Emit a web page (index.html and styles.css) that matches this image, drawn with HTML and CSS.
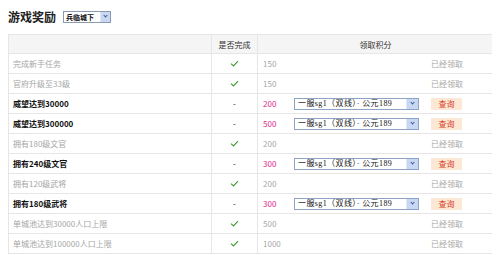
FILE: index.html
```html
<!DOCTYPE html>
<html lang="zh">
<head>
<meta charset="utf-8">
<link rel="stylesheet" href="styles.css">
</head>
<body>
<div class="title-bar">
  <h1 class="title">游戏奖励</h1>
  <div class="mini-select"><span class="mini-text">兵临城下</span><i class="mini-arr"></i></div>
</div>
<table class="rewards">
  <thead>
    <tr><th class="c-name"></th><th class="c-done">是否完成</th><th class="c-pts">领取积分</th></tr>
  </thead>
  <tbody>
    <tr class="got"><td class="c-name">完成新手任务</td><td class="c-done"><svg class="tick" viewBox="0 0 10 8"><path d="M1 4.2 L3.8 6.8 L9 1.2"/></svg></td><td class="c-pts"><div class="pts-grid"><span class="num">150</span><span></span><span></span><span class="status">已经领取</span></div></td></tr>
    <tr class="got"><td class="c-name">官府升级至33级</td><td class="c-done"><svg class="tick" viewBox="0 0 10 8"><path d="M1 4.2 L3.8 6.8 L9 1.2"/></svg></td><td class="c-pts"><div class="pts-grid"><span class="num">150</span><span></span><span></span><span class="status">已经领取</span></div></td></tr>
    <tr class="todo"><td class="c-name">威望达到30000</td><td class="c-done">-</td><td class="c-pts"><div class="pts-grid"><span class="num">200</span><div class="srv-select"><span class="srv-text">一服sg1（双线）· 公元189</span><i class="srv-arr"></i></div><span></span><button class="query">查询</button></div></td></tr>
    <tr class="todo"><td class="c-name">威望达到300000</td><td class="c-done">-</td><td class="c-pts"><div class="pts-grid"><span class="num">500</span><div class="srv-select"><span class="srv-text">一服sg1（双线）· 公元189</span><i class="srv-arr"></i></div><span></span><button class="query">查询</button></div></td></tr>
    <tr class="got"><td class="c-name">拥有180级文官</td><td class="c-done"><svg class="tick" viewBox="0 0 10 8"><path d="M1 4.2 L3.8 6.8 L9 1.2"/></svg></td><td class="c-pts"><div class="pts-grid"><span class="num">200</span><span></span><span></span><span class="status">已经领取</span></div></td></tr>
    <tr class="todo"><td class="c-name">拥有240级文官</td><td class="c-done">-</td><td class="c-pts"><div class="pts-grid"><span class="num">300</span><div class="srv-select"><span class="srv-text">一服sg1（双线）· 公元189</span><i class="srv-arr"></i></div><span></span><button class="query">查询</button></div></td></tr>
    <tr class="got"><td class="c-name">拥有120级武将</td><td class="c-done"><svg class="tick" viewBox="0 0 10 8"><path d="M1 4.2 L3.8 6.8 L9 1.2"/></svg></td><td class="c-pts"><div class="pts-grid"><span class="num">200</span><span></span><span></span><span class="status">已经领取</span></div></td></tr>
    <tr class="todo"><td class="c-name">拥有180级武将</td><td class="c-done">-</td><td class="c-pts"><div class="pts-grid"><span class="num">300</span><div class="srv-select"><span class="srv-text">一服sg1（双线）· 公元189</span><i class="srv-arr"></i></div><span></span><button class="query">查询</button></div></td></tr>
    <tr class="got"><td class="c-name">单城池达到30000人口上限</td><td class="c-done"><svg class="tick" viewBox="0 0 10 8"><path d="M1 4.2 L3.8 6.8 L9 1.2"/></svg></td><td class="c-pts"><div class="pts-grid"><span class="num">500</span><span></span><span></span><span class="status">已经领取</span></div></td></tr>
    <tr class="got"><td class="c-name">单城池达到100000人口上限</td><td class="c-done"><svg class="tick" viewBox="0 0 10 8"><path d="M1 4.2 L3.8 6.8 L9 1.2"/></svg></td><td class="c-pts"><div class="pts-grid"><span class="num">1000</span><span></span><span></span><span class="status">已经领取</span></div></td></tr>
  </tbody>
</table>
</body>
</html>
```
FILE: styles.css
```css
body {
  margin: 8px;
  background: #ffffff;
  font-family: "Noto Sans CJK SC", "Noto Sans", sans-serif;
  color: #222;
}
.title-bar {
  display: flex;
  align-items: center;
  gap: 7px;
  height: 18px;
}
.title {
  margin: 0;
  font-size: 12px;
  font-weight: bold;
  line-height: 18px;
  color: #222;
}
.mini-select {
  display: flex;
  align-items: center;
  height: 10px;
  width: 46px;
  border: 1px solid #8a9ab0;
  background: #fff;
}
.mini-text {
  flex: 1;
  font-size: 7px;
  line-height: 10px;
  padding-left: 2px;
  color: #111;
  font-weight: bold;
}
.mini-arr, .srv-arr {
  position: relative;
  width: 9px;
  height: 100%;
  background: #c9d8f2;
  border-left: 1px solid #dfe8f7;
}
.mini-arr::after, .srv-arr::after {
  content: "";
  position: absolute;
  left: 3px;
  top: 2px;
  width: 2px;
  height: 2px;
  border-right: 1px solid #3a5a9a;
  border-bottom: 1px solid #3a5a9a;
  transform: rotate(45deg);
}
.rewards {
  margin-top: 8px;
  width: 486px;
  border-collapse: collapse;
  font-size: 8px;
}
.rewards th, .rewards td {
  border: 1px solid #e6e6e6;
  padding: 0;
  vertical-align: middle;
}
.rewards th {
  height: 18px;
  background: #f5f5f5;
  font-weight: normal;
  color: #333;
  text-align: center;
}
.rewards td {
  height: 19px;
}
.c-name {
  width: 198px;
  padding-left: 4px !important;
  text-align: left;
}
.c-done {
  width: 45px;
  text-align: center;
}
.rewards td.c-done {
  text-align: center;
}
.got td {
  color: #a6a6a6;
}
.todo td {
  color: #111;
  font-weight: bold;
}
.todo td.c-done {
  font-weight: normal;
}
.tick {
  display: block;
  margin: 0 auto;
  width: 9px;
  height: 7px;
}
.tick path {
  fill: none;
  stroke: #3f9a2c;
  stroke-width: 1.2;
}
.pts-grid {
  display: grid;
  grid-template-columns: 31px 125px 12px auto;
  align-items: center;
  padding-left: 5px;
}
.num {
  font-weight: normal;
}
.todo .num {
  color: #e0288a;
}
.srv-select {
  display: flex;
  align-items: center;
  height: 10px;
  border: 1px solid #8ea4c6;
  background: #fff;
}
.srv-text {
  flex: 1;
  font-family: "Liberation Serif", "Noto Sans CJK SC", serif;
  font-weight: normal;
  font-size: 8px;
  letter-spacing: 0.4px;
  line-height: 10px;
  padding-left: 3px;
  color: #111;
  white-space: nowrap;
}
.srv-arr {
  width: 11px;
}
.srv-arr::after {
  left: 4px;
}
.status {
  font-weight: normal;
  color: #a6a6a6;
}
.query {
  width: 31px;
  height: 12px;
  padding: 0;
  border: 0;
  background: #fce8d4;
  color: #d8402a;
  font-family: "Noto Sans CJK SC", sans-serif;
  font-size: 8px;
  line-height: 12px;
}
```
